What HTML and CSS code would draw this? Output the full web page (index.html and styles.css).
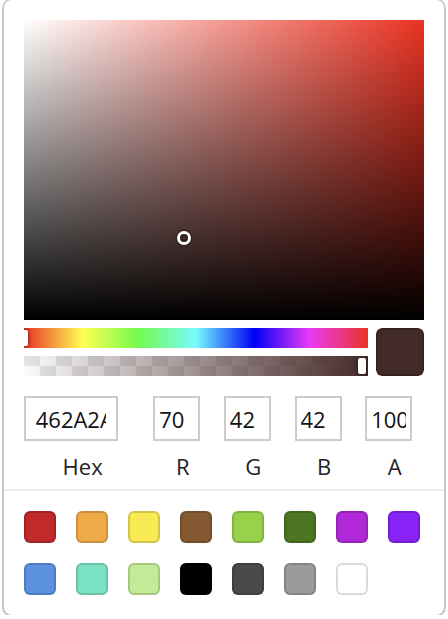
FILE: index.html
```
<!DOCTYPE html>
<html>
<head>
<meta charset="utf-8">
<link rel="stylesheet" href="styles.css">
</head>
<body>
<div class="picker">
  <div class="saturation">
    <div class="sat-white"></div>
    <div class="sat-black"></div>
    <div class="sat-pointer" style="left: 40%; top: 72.55%;"></div>
  </div>
  <div class="controls">
    <div class="sliders">
      <div class="hue"><div class="hue-pointer"></div></div>
      <div class="alpha">
        <div class="alpha-grad"></div>
        <div class="alpha-pointer"></div>
      </div>
    </div>
    <div class="preview"><div class="preview-color"></div></div>
  </div>
  <div class="fields">
    <div class="field double"><input class="input" value="462A2A"><span class="label">Hex</span></div>
    <div class="field single"><input class="input" value="70"><span class="label">R</span></div>
    <div class="field single"><input class="input" value="42"><span class="label">G</span></div>
    <div class="field single"><input class="input" value="42"><span class="label">B</span></div>
    <div class="field single"><input class="input" value="100"><span class="label">A</span></div>
  </div>
  <div class="presets">
    <div class="swatch c1"></div>
    <div class="swatch c2"></div>
    <div class="swatch c3"></div>
    <div class="swatch c4"></div>
    <div class="swatch c5"></div>
    <div class="swatch c6"></div>
    <div class="swatch c7"></div>
    <div class="swatch c8"></div>
    <div class="swatch c9"></div>
    <div class="swatch c10"></div>
    <div class="swatch c11"></div>
    <div class="swatch c12"></div>
    <div class="swatch c13"></div>
    <div class="swatch c14"></div>
    <div class="swatch c15"></div>
  </div>
</div>
</body>
</html>
```

FILE: styles.css
```
* { box-sizing: border-box; }
html, body { margin: 0; padding: 0; background: #fff; }
body { font-family: "Open Sans", "Noto Sans", sans-serif; }

.picker {
  width: 440px;
  margin: 0 4px;
  padding: 20px 20px 0;
  background: #fff;
  border-radius: 8px;
  box-shadow: 0 0 0 2px rgba(0,0,0,.18), 0 1px 2px 1px rgba(0,0,0,.08);
}

.saturation {
  position: relative;
  width: 400px;
  height: 300px;
  background: #ea3323;
}
.sat-white {
  position: absolute; inset: 0;
  background: linear-gradient(to right, #fff, rgba(255,255,255,0));
}
.sat-black {
  position: absolute; inset: 0;
  background: linear-gradient(to top, #000, rgba(0,0,0,0));
}
.sat-pointer {
  position: absolute;
  width: 8px; height: 8px;
  border-radius: 50%;
  transform: translate(-4px, -4px);
  box-shadow: 0 0 0 3px #fff, inset 0 0 2px 2px rgba(0,0,0,.3), 0 0 2px 4px rgba(0,0,0,.4);
}

.controls { display: flex; }
.sliders { flex: 1; padding: 8px 0; }
.hue {
  position: relative;
  height: 20px;
  overflow: hidden;
  background: linear-gradient(to right, #ea3323 0%, #fffe54 17%, #75fb4c 33%, #75fbfd 50%, #0000f5 67%, #ea3af7 83%, #ea3323 100%);
}
.hue-pointer {
  position: absolute;
  left: -4px; top: 2px;
  width: 8px; height: 16px;
  border-radius: 2px;
  background: #fff;
  box-shadow: 0 0 4px rgba(0,0,0,.6);
}
.alpha {
  position: relative;
  height: 20px;
  margin-top: 8px;
  overflow: hidden;
  background: conic-gradient(#fbfbfb 25%, #e4e4e4 0 50%, #fbfbfb 0 75%, #e4e4e4 0) 0 0 / 32px 20px;
}
.alpha-grad {
  position: absolute; inset: 0;
  background: linear-gradient(to right, rgba(70,42,42,0) 0%, rgb(70,42,42) 100%);
}
.alpha-pointer {
  position: absolute;
  left: calc(100% - 10px); top: 2px;
  width: 8px; height: 16px;
  border-radius: 2px;
  background: #fff;
  box-shadow: 0 0 4px rgba(0,0,0,.6);
}
.preview {
  width: 48px; height: 48px;
  margin: 8px 0 0 8px;
  border-radius: 6px;
  overflow: hidden;
}
.preview-color {
  width: 100%; height: 100%;
  background: #432b2a;
  border-radius: 6px;
  box-shadow: inset 0 0 0 1px rgba(0,0,0,.15), inset 0 0 4px rgba(0,0,0,.25);
}

.fields { display: flex; padding-top: 12px; }
.field { display: block; }
.double { flex: 2 1 0; }
.single { flex: 1 1 0; padding-left: 12px; box-sizing: content-box; }
.input {
  display: block;
  width: 80%;
  height: 45px;
  padding: 8px 10% 7px;
  border: none;
  outline: none;
  box-shadow: inset 0 0 0 2px #ccc;
  font-family: "Open Sans", "Noto Sans", sans-serif;
  font-size: 22px;
  line-height: 30px;
  color: #111;
  background: #fff;
}
.label {
  display: block;
  text-align: center;
  font-size: 22px;
  line-height: 30px;
  color: #222;
  padding-top: 10px;
  padding-bottom: 8px;
}

.presets {
  display: flex;
  flex-wrap: wrap;
  margin: 0 -20px;
  padding: 20px 0 0 20px;
  border-top: 2px solid #eee;
}
.swatch {
  width: 32px; height: 32px;
  margin: 0 20px 20px 0;
  border-radius: 6px;
  box-shadow: inset 0 0 0 2px rgba(0,0,0,.15);
}
.c1 { background: #c02a2b; }
.c2 { background: #eeaa46; }
.c3 { background: #f8e955; }
.c4 { background: #855a33; }
.c5 { background: #97d34a; }
.c6 { background: #4d7622; }
.c7 { background: #b028d8; }
.c8 { background: #8723f5; }
.c9 { background: #5c91de; }
.c10 { background: #7ce3c6; }
.c11 { background: #c3ea95; }
.c12 { background: #000; }
.c13 { background: #4a4a4a; }
.c14 { background: #9b9b9b; }
.c15 { background: #fff; }
```
